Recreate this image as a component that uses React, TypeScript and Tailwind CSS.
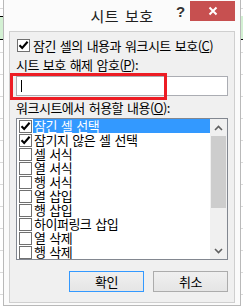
const KR = "font-['Noto_Sans_CJK_KR','Noto_Sans',sans-serif]";

const items = [
  { label: '잠긴 셀 선택', checked: true },
  { label: '잠기지 않은 셀 선택', checked: true },
  { label: '셀 서식', checked: false },
  { label: '열 서식', checked: false },
  { label: '행 서식', checked: false },
  { label: '열 삽입', checked: false },
  { label: '행 삽입', checked: false },
  { label: '하이퍼링크 삽입', checked: false },
  { label: '열 삭제', checked: false },
  { label: '행 삭제', checked: false },
];

function Box({ checked }: { checked?: boolean }) {
  return (
    <span className="flex h-[13px] w-[13px] shrink-0 items-center justify-center border border-[#707070] bg-white">
      {checked && (
        <svg width="11" height="11" viewBox="0 0 11 11">
          <path d="M1.5 5.2 L4.2 8 L9.6 1.8" fill="none" stroke="#000" strokeWidth="2.1" />
        </svg>
      )}
    </span>
  );
}

function Chevron({ up }: { up?: boolean }) {
  return (
    <svg width="9" height="6" viewBox="0 0 9 6">
      <path
        d={up ? 'M1 5 L4.5 1.5 L8 5' : 'M1 1 L4.5 4.5 L8 1'}
        fill="none"
        stroke="#606060"
        strokeWidth="1.6"
      />
    </svg>
  );
}

export default function App() {
  return (
    <div className={`relative h-[306px] w-[243px] overflow-hidden bg-white ${KR}`}>
      {/* excel sheet peeking out behind the dialog */}
      <div className="absolute inset-0 bg-[linear-gradient(to_bottom,#dadada_1px,transparent_1px)] bg-[length:100%_22px] bg-[position:0_8px]" />
      <div className="absolute left-0 top-[16px] h-[24px] w-[3px] border-y border-black bg-[#d3f0d3]" />
      <div className="absolute right-0 top-[16px] h-[24px] w-[3px] border-b border-black bg-[#d3f0d3]" />

      <div className="relative ml-[3px] flex h-[306px] w-[238px] flex-col border-x border-b border-[#b9b9b9] bg-[#fbfbfb]">
        {/* title bar */}
        <div className="relative flex h-[31px] items-center justify-center">
          <span className="text-[15px] leading-none tracking-[0.5px] text-[#202020] [word-spacing:2px]">시트 보호</span>
          <span className="absolute left-[172px] top-[4px] font-['Liberation_Sans',sans-serif] text-[15px] font-bold leading-none text-[#333]">
            ?
          </span>
          <div className="absolute left-[186px] top-[1px] flex h-[20px] w-[45px] items-center justify-center bg-[#c75050]">
            <svg width="10" height="10" viewBox="0 0 10 10">
              <path d="M1.5 1.5 L8.5 8.5 M8.5 1.5 L1.5 8.5" stroke="#fff" strokeWidth="2" />
            </svg>
          </div>
        </div>

        {/* client area */}
        <div className="relative mx-[5px] flex h-[272px] flex-col border border-[#cfcfcf] bg-[#f0f0f0] px-[6px] text-[13px] leading-[14px] tracking-[-0.5px] text-black [word-spacing:1.5px]">
          <label className="ml-[1px] mt-[7px] flex h-[13px] items-center gap-[3px]">
            <Box checked />
            <span>
              잠긴 셀의 내용과 워크시트 보호(<u>C</u>)
            </span>
          </label>

          <div className="mt-[6px] h-[14px]">
            시트 보호 해제 암호(<u>P</u>):
          </div>
          <div className="mt-[4px] flex h-[20px] w-[212px] items-center border border-[#abadb3] bg-white pl-[4px]">
            <span className="h-[12px] w-px bg-black" />
          </div>

          <div className="mt-[5px] h-[14px]">
            워크시트에서 허용할 내용(<u>O</u>):
          </div>
          <div className="mt-[3px] flex h-[142px] w-[212px] border border-[#828790] bg-white">
            <div className="flex flex-1 flex-col">
              {items.map((it, i) => (
                <div key={it.label} className="flex h-[14px] items-center">
                  <span className="ml-[2px]">
                    <Box checked={it.checked} />
                  </span>
                  <span
                    className={`ml-px flex h-[14px] flex-1 items-center pl-px ${
                      i === 0 ? 'bg-[#3399ff] text-white' : ''
                    }`}
                  >
                    {it.label}
                  </span>
                </div>
              ))}
            </div>
            <div className="flex w-[17px] flex-col items-center bg-[#f0f0f0]">
              <div className="flex h-[17px] items-center justify-center">
                <Chevron up />
              </div>
              <div className="h-[72px] w-[15px] bg-[#cdcdcd]" />
              <div className="flex-1" />
              <div className="flex h-[17px] items-center justify-center">
                <Chevron />
              </div>
            </div>
          </div>

          <div className="mt-[11px] flex w-[212px] justify-end gap-[9px]">
            <button className="flex h-[21px] w-[75px] items-center justify-center border border-[#3399ff] bg-[linear-gradient(#f0f0f0,#e5e5e5)]">
              확인
            </button>
            <button className="flex h-[21px] w-[75px] items-center justify-center border border-[#acacac] bg-[linear-gradient(#f0f0f0,#e5e5e5)]">
              취소
            </button>
          </div>

          {/* red annotation box */}
          <div className="pointer-events-none absolute left-0 top-[41px] h-[27px] w-[157px] border-[3px] border-[#ed1c24]" />
        </div>
      </div>
    </div>
  );
}
